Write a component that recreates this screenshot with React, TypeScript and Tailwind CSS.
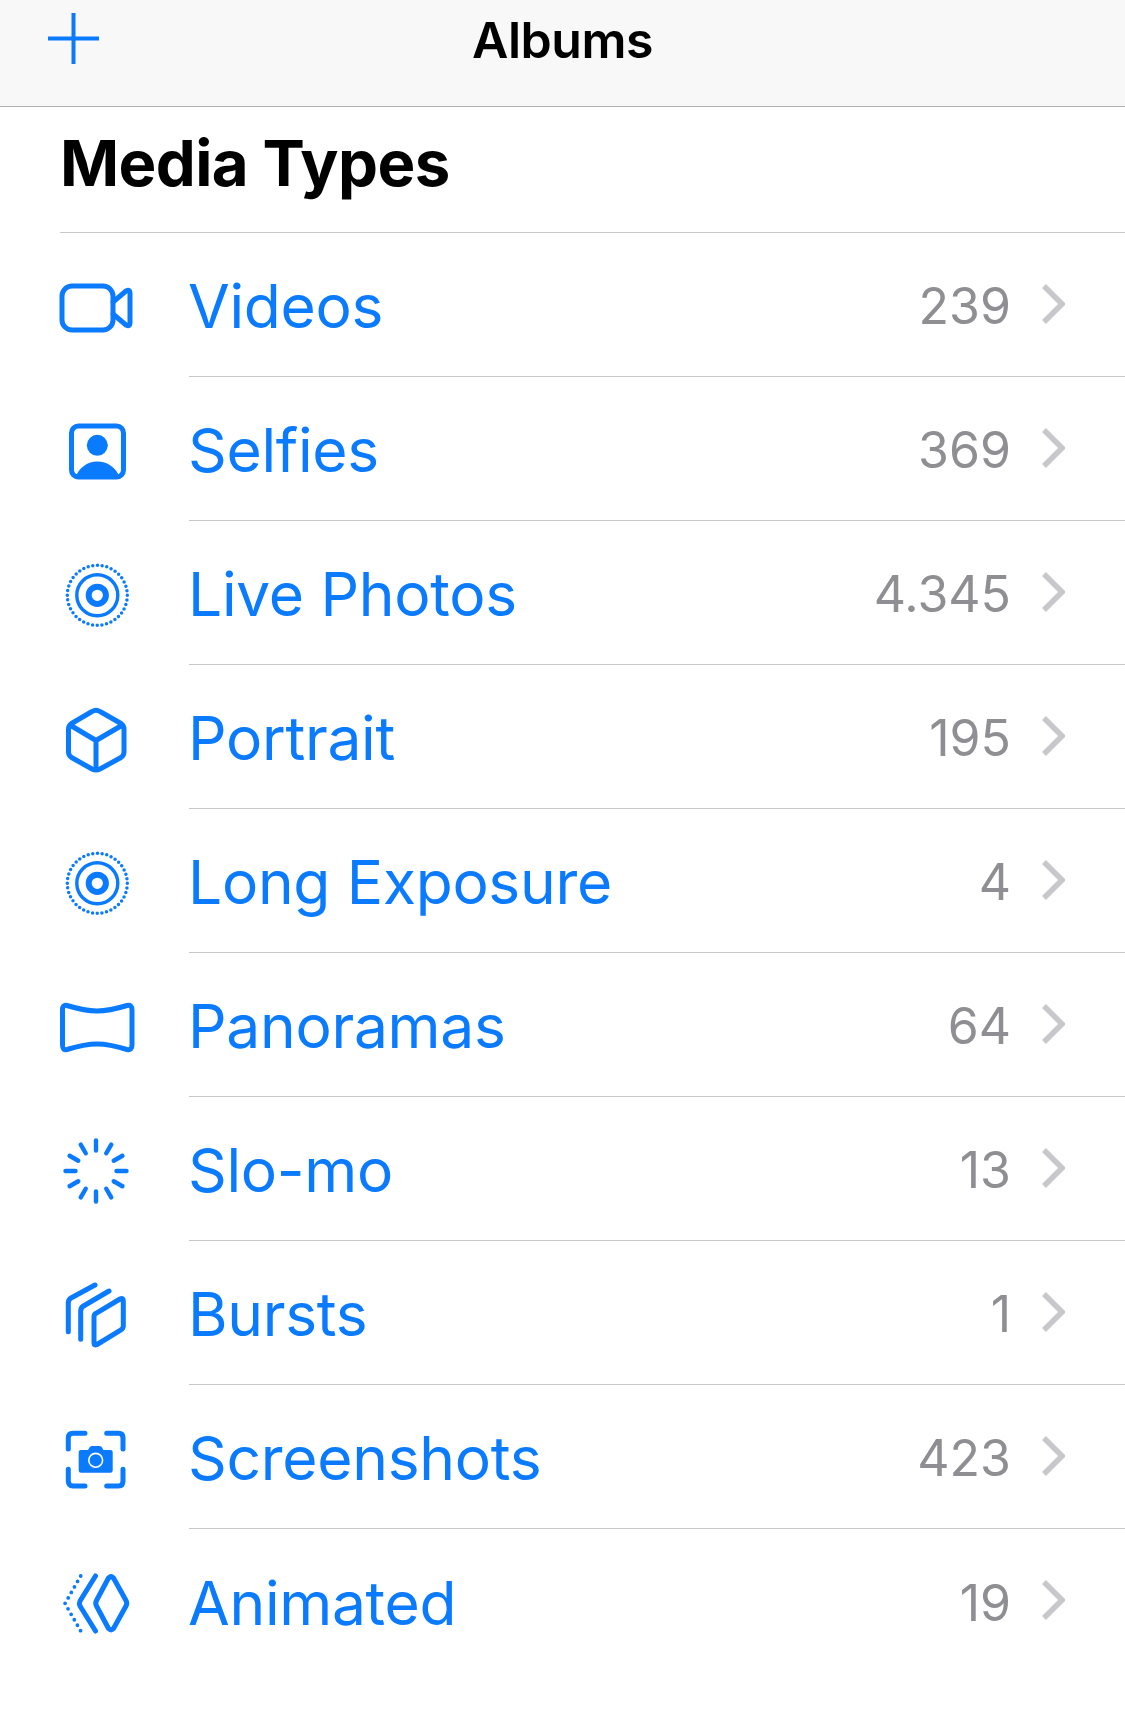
import type { ReactNode } from 'react'

function DottedTarget() {
  return (
    <>
      <circle cx="41.3" cy="42.3" r="30" strokeWidth="3.5" strokeDasharray="0 4.71" strokeLinecap="round" />
      <circle cx="41.3" cy="42.3" r="20.5" strokeWidth="3.4" />
      <circle cx="41.3" cy="42.3" r="8.6" strokeWidth="6" />
    </>
  )
}

const rays = Array.from({ length: 12 }, (_, i) => (i * Math.PI) / 6)

const icons: Record<string, ReactNode> = {
  video: (
    <>
      <rect x="6" y="21" width="51" height="44" rx="10" />
      <path d="M57 37 L70 26 Q74 24 74 28 V58 Q74 62 70 60 L57 49" />
    </>
  ),
  selfie: (
    <>
      <rect x="15.5" y="17" width="52" height="51" rx="7" />
      <circle cx="41.3" cy="36.3" r="10.5" fill="#0a7aff" stroke="none" />
      <path d="M19 69 C23 58 32 52.5 41.3 52.5 C51 52.5 60 58 64 69 Z" fill="#0a7aff" stroke="none" />
    </>
  ),
  live: <DottedTarget />,
  cube: (
    <path d="M36 14.5 Q40 12 44 14.5 L65 26.5 Q68 28.5 68 32 V55 Q68 58.5 65 60.5 L44 72 Q40 74 36 72 L15.5 60.5 Q12.5 58.5 12.5 55 V32 Q12.5 28.5 15.5 26.5 Z M14 28 L40 43.5 L66.5 28 M40 43.5 V72" />
  ),
  pano: (
    <path d="M11 20.5 C24 24.5 32 26 41 26 C50 26 58 24.5 71 20.5 Q76 19.5 76 25 V60 Q76 65.5 71 64.5 C58 60.5 50 59 41 59 C32 59 24 60.5 11 64.5 Q6.5 65.5 6.5 60 V25 Q6.5 19.5 11 20.5 Z" />
  ),
  slomo: (
    <>
      {rays.map((a) => (
        <line
          key={a}
          x1={40 + 20.5 * Math.sin(a)}
          y1={42 - 20.5 * Math.cos(a)}
          x2={40 + 30.5 * Math.sin(a)}
          y2={42 - 30.5 * Math.cos(a)}
          strokeWidth="4.4"
        />
      ))}
    </>
  ),
  bursts: (
    <>
      <path d="M12.3 58.7 V30 Q12.3 26.5 15 25 L39 12" />
      <path d="M24.7 66.3 V38 Q24.7 34.7 27.5 33 L53 18" />
      <path d="M38 44 Q38 41.3 40 40.3 L64 26 Q67.3 24.5 67.3 28 V53 Q67.3 55.5 65 56.8 L41 71.5 Q38 73 38 70 Z" />
    </>
  ),
  screenshot: (
    <>
      <path d="M12.3 32 V21 Q12.3 16.3 17 16.3 H29 M50.7 16.3 H62.5 Q67 16.3 67 21 V32 M67 52.3 V64 Q67 69 62.5 69 H50.7 M29 69 H17 Q12.3 69 12.3 64 V52.3" />
      <path d="M25 33 H32 L33.5 30.5 Q34 29 36 29 H43.5 Q45.5 29 46 30.5 L47.5 33 H54.5 Q56.7 33 56.7 35 V53.5 Q56.7 55.7 54.5 55.7 H25 Q22.7 55.7 22.7 53.5 V35 Q22.7 33 25 33 Z" fill="#0a7aff" stroke="none" />
      <circle cx="39.7" cy="43.3" r="6.9" stroke="#ffffff" strokeWidth="1.6" />
    </>
  ),
  animated: (
    <>
      <path d="M52.5 17 Q55 14.5 57.5 17 L70 39.5 Q71.5 42.3 70 45 L57.5 67.5 Q55 70 52.5 67.5 L40.5 45 Q39 42.3 40.5 39.5 Z" strokeWidth="5" />
      <path d="M39.5 15 L24 40 Q22.8 42.5 24 45 L39.5 70" />
      <path d="M24.7 15 L9 42.5 L24.7 70" strokeWidth="3.8" strokeDasharray="0 6.3" />
    </>
  ),
}

const rows = [
  { name: 'Videos', count: '239', icon: 'video' },
  { name: 'Selfies', count: '369', icon: 'selfie' },
  { name: 'Live Photos', count: '4.345', icon: 'live' },
  { name: 'Portrait', count: '195', icon: 'cube' },
  { name: 'Long Exposure', count: '4', icon: 'live' },
  { name: 'Panoramas', count: '64', icon: 'pano' },
  { name: 'Slo-mo', count: '13', icon: 'slomo' },
  { name: 'Bursts', count: '1', icon: 'bursts' },
  { name: 'Screenshots', count: '423', icon: 'screenshot' },
  { name: 'Animated', count: '19', icon: 'animated' },
]

function Row({ name, count, icon, last }: { name: string; count: string; icon: string; last: boolean }) {
  return (
    <div className="flex h-[144px]">
      <div className="flex w-[189px] shrink-0 items-center pl-14">
        <svg viewBox="0 0 80 80" className="h-20 w-20" fill="none" stroke="#0a7aff" strokeWidth="5" strokeLinecap="round" strokeLinejoin="round">
          {icons[icon]}
        </svg>
      </div>
      <div className={`flex flex-1 items-center ${last ? '' : 'border-b border-[#c8c7cc]'}`}>
        <span className="-ml-[1px] flex-1 pt-[4px] text-[60.5px] leading-none tracking-[-0.3px] text-[#0a7aff]">{name}</span>
        <span className="pt-[3px] text-[50px] leading-none text-[#8e8e93]">{count}</span>
        <svg viewBox="0 0 24 40" className="mr-[60px] mb-[2px] ml-[30px] h-10 w-6" fill="none" stroke="#c7c7cc" strokeWidth="5.5">
          <path d="M3 2 L21 20 L3 38" />
        </svg>
      </div>
    </div>
  )
}

export default function App() {
  return (
    <div className="min-h-[1719px] overflow-hidden bg-white font-['Inter',sans-serif] text-black">
      <header className="grid h-[107px] grid-cols-3 border-b border-[#b2b2b2] bg-[#f8f8f8] px-12">
        <div className="pt-[13px]">
          <svg viewBox="0 0 51 51" className="h-[51px] w-[51px]" stroke="#0a7aff" strokeWidth="4">
            <path d="M25.5 0 V51 M0 25.5 H51" />
          </svg>
        </div>
        <div className="pt-[14px] text-center text-[50px] leading-[52px] font-semibold tracking-[-0.5px]">Albums</div>
      </header>
      <div className="h-[126px] pl-[60px]">
        <div className="flex h-full items-center border-b border-[#c8c7cc] pb-[14px]">
          <h1 className="text-[63.5px] leading-none font-bold tracking-[-0.6px]">Media Types</h1>
        </div>
      </div>
      {rows.map((r, i) => (
        <Row key={r.name} {...r} last={i === rows.length - 1} />
      ))}
    </div>
  )
}
